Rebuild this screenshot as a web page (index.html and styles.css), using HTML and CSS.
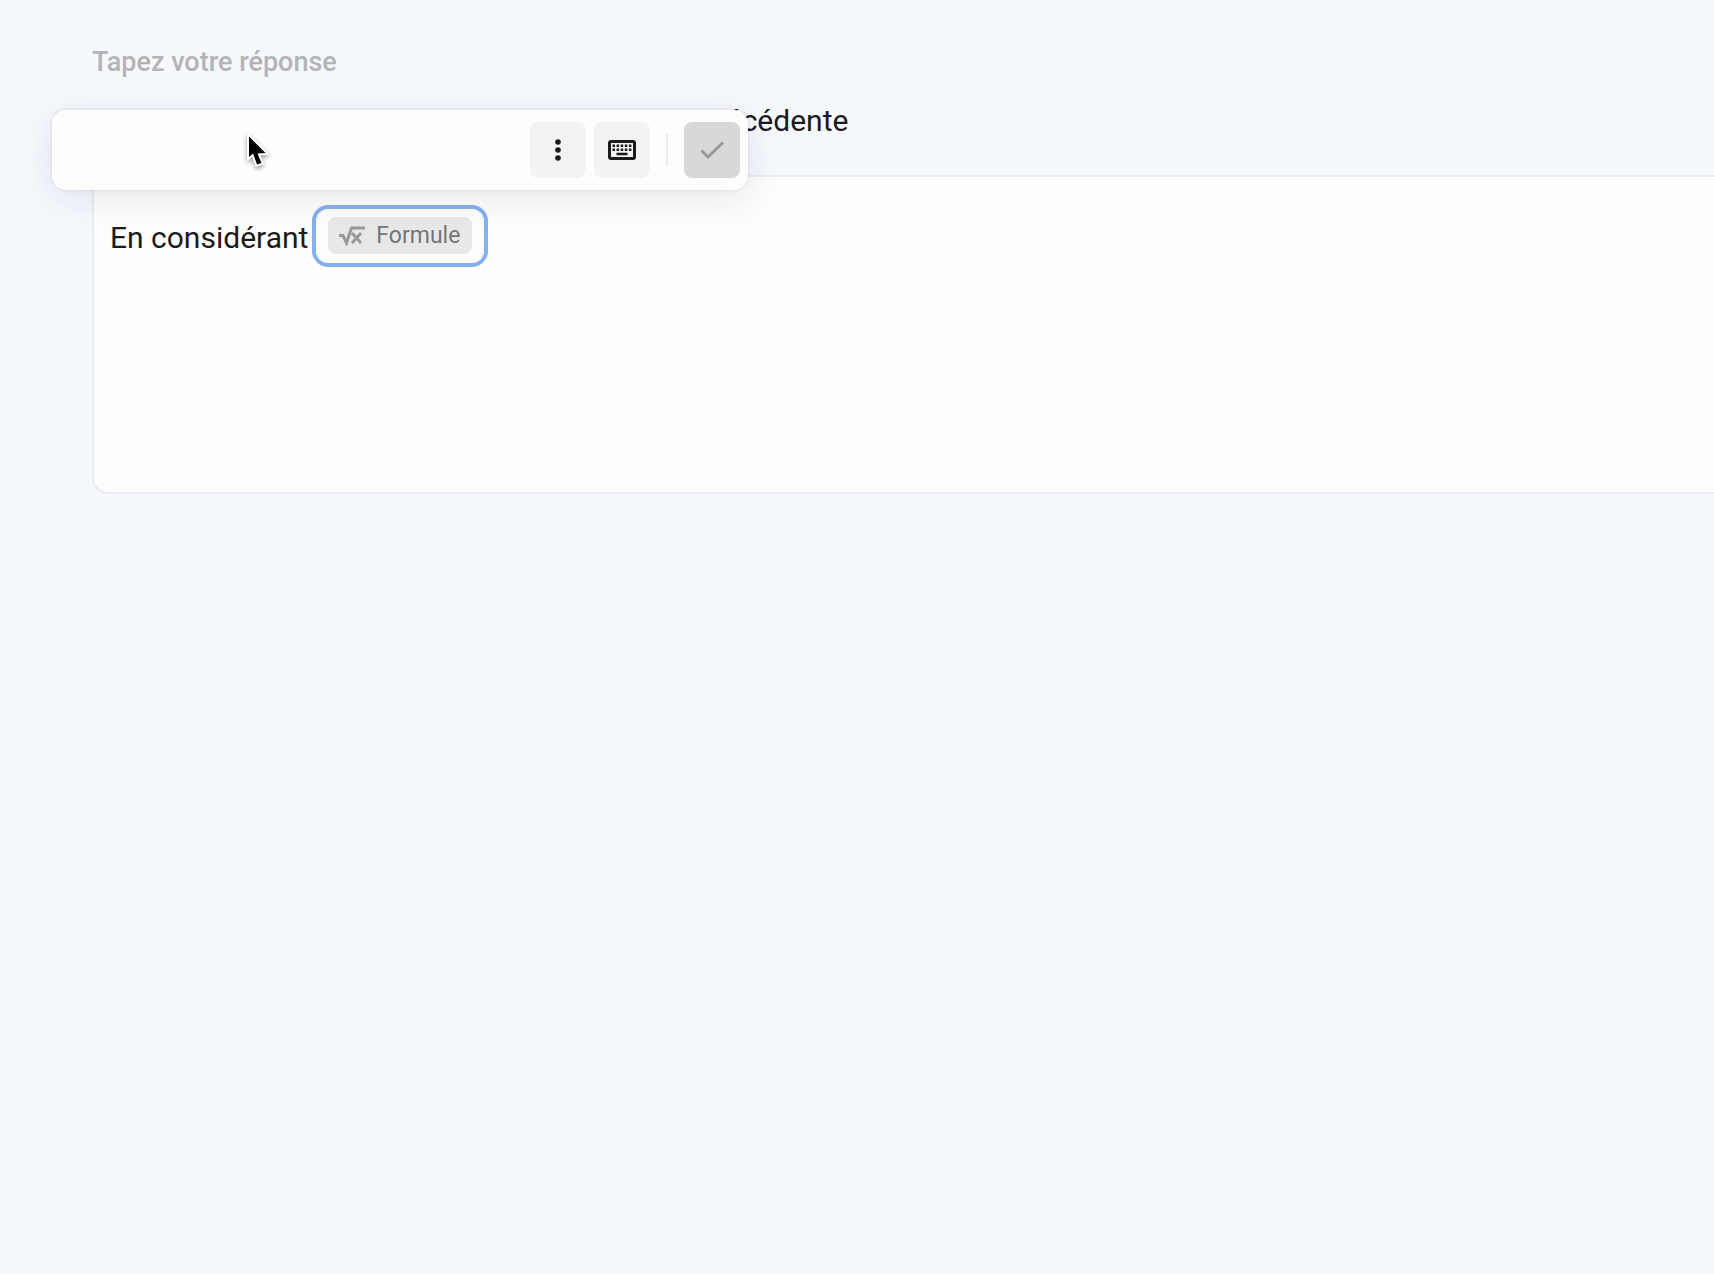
FILE: index.html
```html
<!DOCTYPE html>
<html lang="fr">
<head>
    <meta charset="UTF-8">
    <meta name="viewport" content="width=device-width, initial-scale=1.0">
    <title>Réponse</title>
    <link rel="stylesheet" href="styles.css">
</head>
<body>
    <main class="answer">
        <h2 class="answer-label" id="answer-label">Tapez votre réponse</h2>
        <p class="answer-hint">précédente</p>
        <div class="editor" contenteditable="true" role="textbox" aria-multiline="true" aria-labelledby="answer-label">
            <span class="editor-text">En considérant</span>
            <button type="button" class="formula" contenteditable="false">
                <span class="formula-chip">
                    <svg class="formula-icon" viewBox="0 0 28 20" aria-hidden="true">
                        <path d="M1 9.500H5L8.500 17L13.500 2H27" />
                        <path d="M14 7L23 17M23 7L14 17" />
                    </svg>
                    Formule
                </span>
            </button>
        </div>

        <div class="toolbar" role="toolbar" aria-label="Formule">
            <input class="math-input" type="text" aria-label="Formule">
            <button type="button" class="tool" aria-label="Menu">
                <svg viewBox="0 0 32 32" aria-hidden="true">
                    <circle cx="16" cy="8" r="2.800" />
                    <circle cx="16" cy="16" r="2.800" />
                    <circle cx="16" cy="24" r="2.800" />
                </svg>
            </button>
            <button type="button" class="tool" aria-label="Clavier">
                <svg viewBox="0 0 32 32" aria-hidden="true">
                    <rect class="key-frame" x="3.500" y="7.500" width="25" height="17" rx="1.500" />
                    <path d="M6.500 10.500h2.500v2.500h-2.500zM10.600 10.500h2.500v2.500h-2.500zM14.700 10.500h2.500v2.500h-2.500zM18.800 10.500h2.500v2.500h-2.500zM22.900 10.500h2.500v2.500h-2.500zM6.500 14.600h2.500v2.500h-2.500zM10.600 14.600h2.500v2.500h-2.500zM14.700 14.600h2.500v2.500h-2.500zM18.800 14.600h2.500v2.500h-2.500zM22.900 14.600h2.500v2.500h-2.500zM10.500 18.800h11v2.400h-11z" />
                </svg>
            </button>
            <span class="divider"></span>
            <button type="button" class="tool tool-confirm" aria-label="Valider" disabled>
                <svg viewBox="0 0 32 32" aria-hidden="true">
                    <path class="check" d="M5.500 16.500L12 23L27 8.500" />
                </svg>
            </button>
        </div>

        <svg class="cursor" viewBox="0 0 24 36" aria-hidden="true">
            <path d="M3 3.500V24L7 20.500L11 31.500L15.500 30L11.500 20.500L19.500 20Z" />
        </svg>
    </main>
</body>
</html>
```

FILE: styles.css
```css
body {
    margin: 0;
    background-color: #f5f8fd;
    color: #1b1b1d;
    font-family: Roboto, "Liberation Sans", sans-serif;
    font-size: 30px;
}
button {
    padding: 0;
    border: none;
    font-family: inherit;
    cursor: pointer;
}
.answer {
    position: relative;
    padding: 44px 0 44px 92px;
}
.answer-label {
    margin: 0;
    font-size: 27px;
    font-weight: 500;
    line-height: 36px;
    color: #b4b4b7;
}
.answer-hint {
    margin: 20px 0 34px;
    padding-left: 607px;
    line-height: 41px;
}
.editor {
    box-sizing: border-box;
    display: flex;
    align-items: flex-start;
    gap: 4px;
    min-height: 319px;
    padding: 28px 16px;
    border: 2px solid #e9ecf1;
    border-right: none;
    border-radius: 16px 0 0 16px;
    background-color: #fdfdfd;
    outline: none;
}
.editor-text {
    line-height: 66px;
}
.formula {
    padding: 8px 12px 9px;
    border: 4px solid #87b0f2;
    border-radius: 16px;
    background-color: transparent;
}
.formula-chip {
    display: flex;
    align-items: center;
    gap: 10px;
    padding: 0 12px 0 10px;
    border-radius: 8px;
    background-color: #e8e8e8;
    color: #757575;
    font-size: 23px;
    line-height: 37px;
}
.formula-icon {
    width: 28px;
    height: 20px;
    fill: none;
    stroke: #999;
    stroke-width: 3;
}
.toolbar {
    position: absolute;
    top: 110px;
    left: 52px;
    box-sizing: border-box;
    display: flex;
    align-items: center;
    gap: 8px;
    width: 696px;
    height: 80px;
    padding: 12px 8px;
    border-radius: 14px;
    background-color: #fdfdfd;
    box-shadow: 0 0 2px 1px rgba(40, 40, 90, 0.07), 0 8px 36px rgba(30, 30, 50, 0.1);
}
.math-input {
    flex: 1;
    min-width: 0;
    height: 48px;
    border: none;
    outline: none;
    background-color: transparent;
    font-size: 30px;
}
.tool {
    display: flex;
    align-items: center;
    justify-content: center;
    width: 56px;
    height: 56px;
    border-radius: 8px;
    background-color: #f3f3f3;
}
.tool svg {
    width: 32px;
    height: 32px;
    fill: #1b1b1b;
}
.tool .key-frame {
    fill: none;
    stroke: #1b1b1b;
    stroke-width: 3;
}
.divider {
    width: 2px;
    height: 32px;
    margin: 0 8px;
    background-color: #ececec;
}
.tool-confirm {
    background-color: #d8d8d8;
    cursor: default;
}
.tool .check {
    fill: none;
    stroke: #999;
    stroke-width: 3;
}
.cursor {
    position: absolute;
    top: 133px;
    left: 246px;
    width: 24px;
    height: 36px;
    fill: #000;
    stroke: #fff;
    stroke-width: 4;
    paint-order: stroke;
    filter: drop-shadow(0 2px 2px rgba(0, 0, 0, 0.4));
    pointer-events: none;
}
```
